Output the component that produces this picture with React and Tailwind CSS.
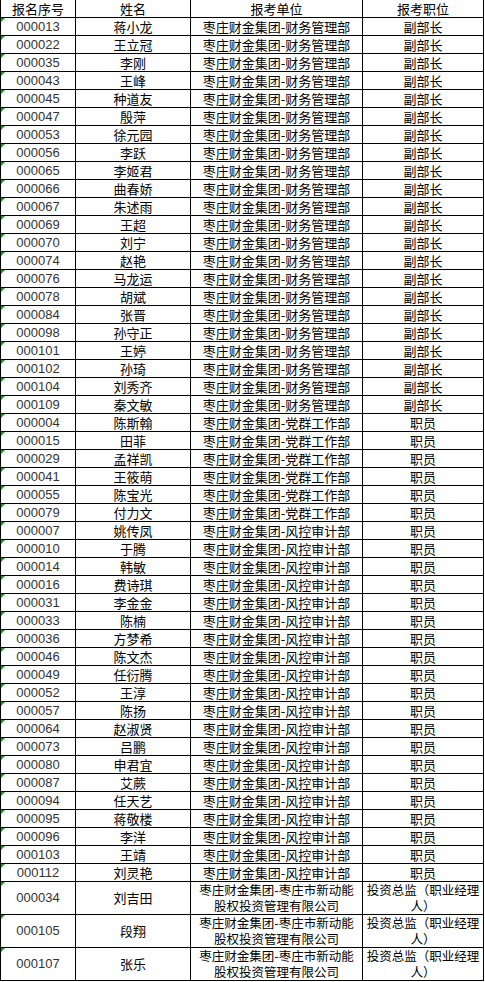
import React from 'react';

const cn = "'Noto Sans CJK SC', 'Noto Sans CJK JP', sans-serif";
const num = "'Liberation Sans', Arial, sans-serif";

const fin = '枣庄财金集团-财务管理部';
const dq = '枣庄财金集团-党群工作部';
const fk = '枣庄财金集团-风控审计部';

const rows = [
  ['000013', '蒋小龙', fin, '副部长'],
  ['000022', '王立冠', fin, '副部长'],
  ['000035', '李刚', fin, '副部长'],
  ['000043', '王峰', fin, '副部长'],
  ['000045', '种道友', fin, '副部长'],
  ['000047', '殷萍', fin, '副部长'],
  ['000053', '徐元园', fin, '副部长'],
  ['000056', '李跃', fin, '副部长'],
  ['000065', '李姬君', fin, '副部长'],
  ['000066', '曲春娇', fin, '副部长'],
  ['000067', '朱述雨', fin, '副部长'],
  ['000069', '王超', fin, '副部长'],
  ['000070', '刘宁', fin, '副部长'],
  ['000074', '赵艳', fin, '副部长'],
  ['000076', '马龙运', fin, '副部长'],
  ['000078', '胡斌', fin, '副部长'],
  ['000084', '张晋', fin, '副部长'],
  ['000098', '孙守正', fin, '副部长'],
  ['000101', '王婷', fin, '副部长'],
  ['000102', '孙琦', fin, '副部长'],
  ['000104', '刘秀齐', fin, '副部长'],
  ['000109', '秦文敏', fin, '副部长'],
  ['000004', '陈斯翰', dq, '职员'],
  ['000015', '田菲', dq, '职员'],
  ['000029', '孟祥凯', dq, '职员'],
  ['000041', '王筱萌', dq, '职员'],
  ['000055', '陈宝光', dq, '职员'],
  ['000079', '付力文', dq, '职员'],
  ['000007', '姚传凤', fk, '职员'],
  ['000010', '于腾', fk, '职员'],
  ['000014', '韩敏', fk, '职员'],
  ['000016', '费诗琪', fk, '职员'],
  ['000031', '李金金', fk, '职员'],
  ['000033', '陈楠', fk, '职员'],
  ['000036', '方梦希', fk, '职员'],
  ['000046', '陈文杰', fk, '职员'],
  ['000049', '任衍腾', fk, '职员'],
  ['000052', '王淳', fk, '职员'],
  ['000057', '陈扬', fk, '职员'],
  ['000064', '赵淑贤', fk, '职员'],
  ['000073', '吕鹏', fk, '职员'],
  ['000080', '申君宜', fk, '职员'],
  ['000087', '艾蕨', fk, '职员'],
  ['000094', '任天艺', fk, '职员'],
  ['000095', '蒋敬楼', fk, '职员'],
  ['000096', '李洋', fk, '职员'],
  ['000103', '王靖', fk, '职员'],
  ['000112', '刘灵艳', fk, '职员'],
];

const tall = [
  ['000034', '刘吉田'],
  ['000105', '段翔'],
  ['000107', '张乐'],
];

const Flag = () => (
  <span className="absolute left-0 top-0 w-0 h-0 border-t-[4px] border-r-[4px] border-t-[#1a9a1a] border-r-transparent" />
);

const IdCell = ({ id }) => (
  <div
    className="relative w-[76px] shrink-0 border-l border-r border-black flex items-center justify-center text-[13px] text-[#333]"
    style={{ fontFamily: num }}
  >
    <Flag />
    {id}
  </div>
);

export default function App() {
  return (
    <div className="w-[485px] h-[982px] bg-white text-black text-[13px] overflow-hidden" style={{ fontFamily: cn }}>
      <div className="w-[484px]">
        <div className="flex h-[18px] border-b border-black leading-none">
          <div className="w-[76px] shrink-0 border-l border-r border-black flex items-center justify-center">报名序号</div>
          <div className="w-[115px] shrink-0 border-r border-black flex items-center justify-center">姓名</div>
          <div className="w-[172px] shrink-0 border-r border-black flex items-center justify-center">报考单位</div>
          <div className="w-[121px] shrink-0 border-r border-black flex items-center justify-center">报考职位</div>
        </div>
        {rows.map(([id, name, unit, job]) => (
          <div key={id} className="flex h-[18px] border-b border-black leading-none">
            <IdCell id={id} />
            <div className="w-[115px] shrink-0 border-r border-black flex items-center justify-center">{name}</div>
            <div className="w-[172px] shrink-0 border-r border-black flex items-center justify-center whitespace-nowrap">{unit}</div>
            <div className="w-[121px] shrink-0 border-r border-black flex items-center justify-center">{job}</div>
          </div>
        ))}
        {tall.map(([id, name]) => (
          <div key={id} className="flex h-[33px] border-b border-black">
            <IdCell id={id} />
            <div className="w-[115px] shrink-0 border-r border-black flex items-center justify-center">{name}</div>
            <div className="w-[172px] shrink-0 border-r border-black flex flex-col items-center justify-center whitespace-nowrap text-[12.5px] leading-[16px]">
              <span>枣庄财金集团-枣庄市新动能</span>
              <span>股权投资管理有限公司</span>
            </div>
            <div className="w-[121px] shrink-0 border-r border-black flex flex-col items-center justify-center whitespace-nowrap text-[12.5px] leading-[16px]">
              <span>投资总监（职业经理</span>
              <span>人）</span>
            </div>
          </div>
        ))}
      </div>
    </div>
  );
}
